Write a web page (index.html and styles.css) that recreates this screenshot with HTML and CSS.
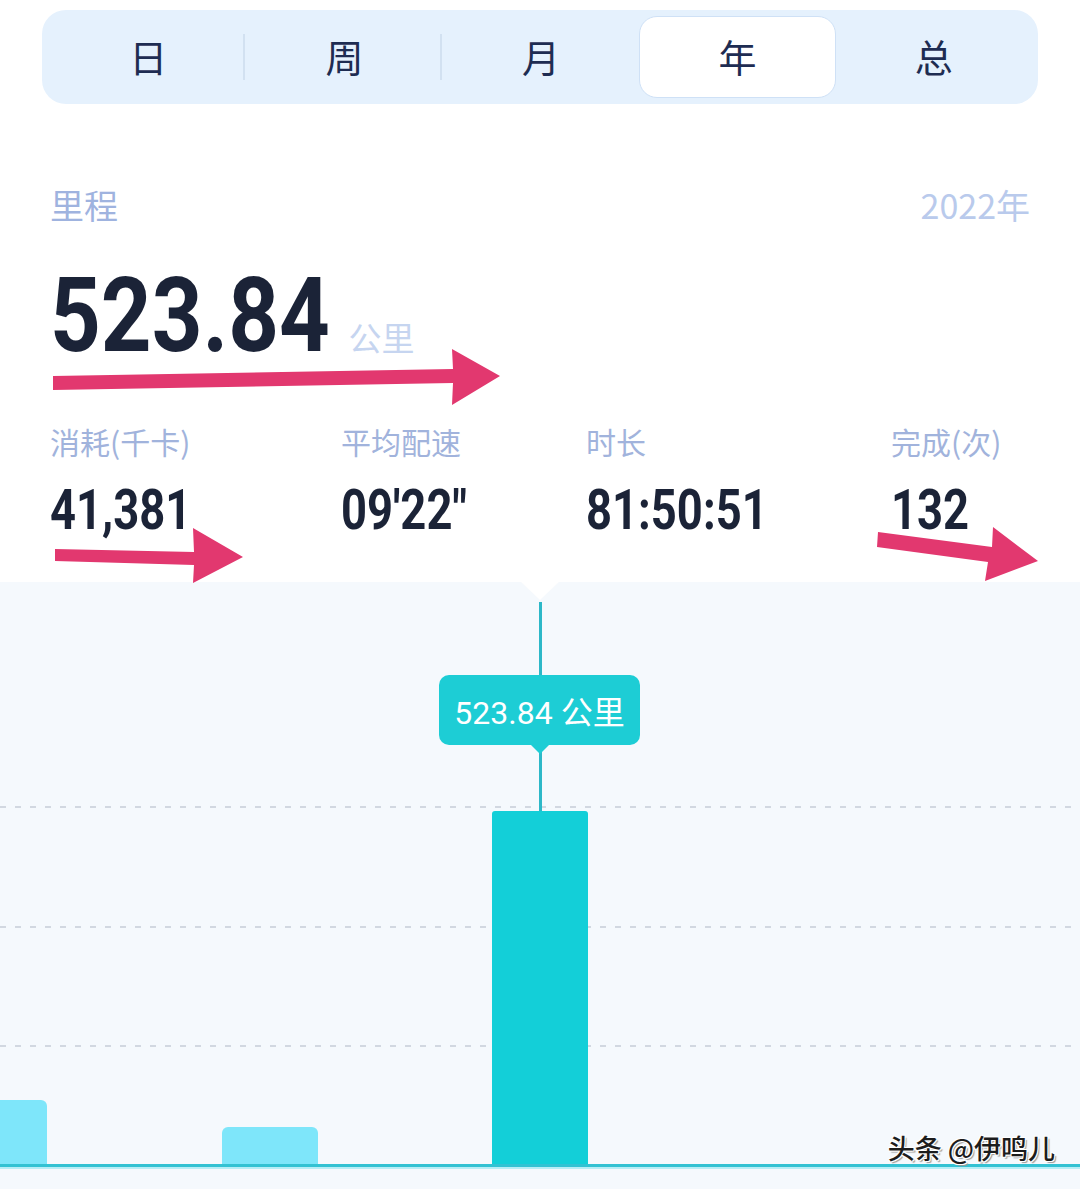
FILE: index.html
```html
<!DOCTYPE html>
<html lang="zh-CN">
<head>
<meta charset="utf-8">
<title>年度里程</title>
<link rel="stylesheet" href="styles.css">
</head>
<body>
<div class="page">
  <nav class="tabs">
    <div class="tab sep">日</div>
    <div class="tab sep">周</div>
    <div class="tab">月</div>
    <div class="tab active">年</div>
    <div class="tab">总</div>
  </nav>

  <header class="head">
    <span class="head-title">里程</span>
    <span class="head-year">2022年</span>
  </header>

  <div class="total">
    <span class="total-value">523.84</span>
    <span class="total-unit">公里</span>
  </div>

  <section class="stats">
    <div class="stat">
      <div class="stat-label">消耗(千卡)</div>
      <div class="stat-value"><span>41,381</span></div>
    </div>
    <div class="stat">
      <div class="stat-label">平均配速</div>
      <div class="stat-value"><span>09'22"</span></div>
    </div>
    <div class="stat">
      <div class="stat-label">时长</div>
      <div class="stat-value"><span>81:50:51</span></div>
    </div>
    <div class="stat">
      <div class="stat-label">完成(次)</div>
      <div class="stat-value"><span>132</span></div>
    </div>
  </section>

  <section class="chart">
    <svg class="chart-svg" width="1080" height="606" viewBox="0 0 1080 606">
      <polygon points="521,0 559,0 540,18" fill="#ffffff"/>
      <g stroke="#d2d8e1" stroke-width="2" stroke-dasharray="6 9">
        <line x1="0" y1="225" x2="1080" y2="225"/>
        <line x1="0" y1="345" x2="1080" y2="345"/>
        <line x1="0" y1="464" x2="1080" y2="464"/>
      </g>
      <rect x="539" y="20" width="3" height="212" fill="#2db8c8"/>
      <path d="M0 518 H41 a6 6 0 0 1 6 6 V583 H0 Z" fill="#7ee6fa"/>
      <path d="M222 551 a6 6 0 0 1 6 -6 H312 a6 6 0 0 1 6 6 V583 H222 Z" fill="#7ee6fa"/>
      <path d="M492 232 a3 3 0 0 1 3 -3 H585 a3 3 0 0 1 3 3 V583 H492 Z" fill="#13cfd8"/>
      <rect x="0" y="582" width="1080" height="3" fill="#33c2d3"/>
      <rect x="0" y="585" width="1080" height="2" fill="#b8eef6"/>
    </svg>
    <div class="tooltip">523.84 公里</div>
    <div class="watermark">头条 @伊鸣儿</div>
  </section>

  <svg class="marks" width="1080" height="1189" viewBox="0 0 1080 1189">
    <g fill="#e2386f">
      <polygon points="53,376 453,369 452,349 500,376 452,405 453,383 53,390"/>
      <polygon points="55,549 194,552 193,528 243,557 193,583 194,565 55,561"/>
      <polygon points="878,532 992,547 993,527 1038,561 985,581 988,562 877,547"/>
    </g>
  </svg>
</div>
</body>
</html>
```

FILE: styles.css
```css
* {
  box-sizing: border-box;
}

html, body {
  margin: 0;
  padding: 0;
  background: #ffffff;
}

body {
  font-family: "Noto Sans CJK SC", "Noto Sans", sans-serif;
  width: 1080px;
  height: 1189px;
  overflow: hidden;
}

.page {
  position: relative;
  width: 1080px;
  height: 1189px;
  display: flex;
  flex-direction: column;
}

/* segmented tabs */
.tabs {
  margin: 10px 42px 0;
  height: 94px;
  background: #e5f1fd;
  border-radius: 24px;
  display: grid;
  grid-template-columns: repeat(5, 1fr);
  align-items: center;
  padding: 0 6px 0 8px;
}

.tab {
  height: 82px;
  display: flex;
  align-items: center;
  justify-content: center;
  padding-bottom: 3px;
  font-size: 38px;
  color: #1e2c52;
  border: 1.5px solid transparent;
  border-radius: 18px;
}

.tab.sep {
  background: linear-gradient(#d2e1f1, #d2e1f1) right center / 2px 46px no-repeat;
}

.tab.active {
  background: #ffffff;
  border-color: #cfe1f6;
}

/* heading */
.head {
  margin-top: 81px;
  padding: 0 50px;
  display: flex;
  justify-content: space-between;
  font-size: 34px;
  line-height: 40px;
}

.head-title {
  color: #9fb3df;
}

.head-year {
  color: #b9caec;
}

/* total */
.total {
  margin-top: 36px;
  padding-left: 50px;
  display: flex;
  align-items: baseline;
}

.total-value {
  display: inline-block;
  font-family: "Roboto", "Liberation Sans", sans-serif;
  font-weight: 700;
  font-size: 104px;
  line-height: 110px;
  color: #1b2337;
  transform: scaleX(0.852);
  transform-origin: left center;
  margin-right: -48px;
}

.total-unit {
  margin-left: 18px;
  font-size: 33px;
  line-height: 40px;
  color: #c6d5f0;
}

/* stats */
.stats {
  margin-top: 52px;
  padding-left: 50px;
  display: grid;
  grid-template-columns: 291px 245px 305px auto;
}

.stat-label {
  font-size: 30px;
  line-height: 36px;
  color: #a1b3dc;
}

.stat-value {
  margin-top: 21px;
  font-family: "Roboto", "Liberation Sans", sans-serif;
  font-weight: 700;
  font-size: 56px;
  line-height: 60px;
  color: #1b2337;
}

.stat-value span {
  display: inline-block;
  transform: scaleX(0.81);
  transform-origin: left center;
}

/* chart */
.chart {
  position: relative;
  margin-top: 42px;
  flex: 1;
  background: #f5f9fd;
}

.chart-svg {
  display: block;
}

.tooltip {
  position: absolute;
  left: 439px;
  top: 93px;
  width: 201px;
  height: 70px;
  border-radius: 10px;
  background: #1dcdd5;
  color: #ffffff;
  font-family: "Roboto", "Noto Sans CJK SC", sans-serif;
  font-size: 32px;
  display: flex;
  align-items: center;
  justify-content: center;
}

.tooltip::after {
  content: "";
  position: absolute;
  left: 50%;
  bottom: -9px;
  margin-left: -9px;
  border-left: 9px solid transparent;
  border-right: 9px solid transparent;
  border-top: 9px solid #1dcdd5;
}

.watermark {
  position: absolute;
  right: 25px;
  top: 551px;
  font-size: 27px;
  line-height: 30px;
  font-weight: 500;
  color: #1c1c1c;
  text-shadow: 1px 1px 0 #ffffff, -1px -1px 0 #ffffff, 1px -1px 0 #ffffff, -1px 1px 0 #ffffff, 2px 2px 1px #9a9a9a;
}

/* annotation arrows drawn over the screenshot */
.marks {
  position: absolute;
  left: 0;
  top: 0;
  pointer-events: none;
}
```
